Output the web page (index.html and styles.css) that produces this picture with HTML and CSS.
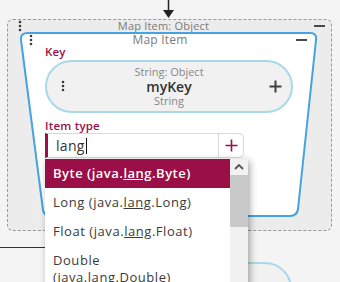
FILE: index.html
```html
<!DOCTYPE html>
<html lang="en">
  <head>
    <meta charset="UTF-8" />
    <meta name="viewport" content="width=device-width, initial-scale=1.0" />
    <title>Map Item</title>
    <link rel="stylesheet" href="styles.css">
  </head>
  <body>
    <div class="canvas">
      <!-- incoming edge -->
      <svg class="edge-in" width="14" height="19" viewBox="0 0 14 19">
        <line x1="7.5" y1="0" x2="7.5" y2="12" stroke="#222" stroke-width="1.5" />
        <polygon points="2,10 13,10 7.5,18" fill="#222" />
      </svg>
      <div class="edge-left"></div>

      <!-- node below, partly hidden -->
      <div class="pill pill-below"></div>

      <div class="node-outer">
        <div class="node-head">
          <span class="dots">
            <svg width="4" height="13" viewBox="0 0 4 13"><circle cx="2" cy="2" r="1.3" /><circle cx="2" cy="6" r="1.3" /><circle cx="2" cy="10" r="1.3" /></svg>
          </span>
          <span class="node-title">Map Item: Object</span>
          <span class="minus"></span>
        </div>

        <div class="node-inner">
          <svg class="inner-shape" width="299" height="186" viewBox="0 0 299 186">
            <path d="M8 1 L290 1 Q297 1 296 8 L278 177 Q277 184 270 184 L30 184 Q24 184 23 178 L1 8 Q0 1 8 1 Z" fill="#fff" stroke="#44a3e0" stroke-width="2" />
          </svg>
          <div class="inner-head">
            <span class="dots">
              <svg width="4" height="13" viewBox="0 0 4 13"><circle cx="2" cy="2" r="1.3" /><circle cx="2" cy="6" r="1.3" /><circle cx="2" cy="10" r="1.3" /></svg>
            </span>
            <span class="inner-title">Map Item</span>
            <span class="minus"></span>
          </div>
          <div class="inner-body">
            <div class="label">Key</div>
            <div class="pill key-pill">
              <span class="pill-side">
                <svg width="4" height="13" viewBox="0 0 4 13"><circle cx="2" cy="2" r="1.3" /><circle cx="2" cy="6" r="1.3" /><circle cx="2" cy="10" r="1.3" /></svg>
              </span>
              <div class="pill-text">
                <div class="pill-type">String: Object</div>
                <div class="pill-name">myKey</div>
                <div class="pill-type">String</div>
              </div>
              <span class="pill-side pill-side-right">
                <svg width="13" height="13" viewBox="0 0 13 13"><path d="M6.5 0.5 V12.5 M0.5 6.5 H12.5" stroke="#3d4248" stroke-width="2" /></svg>
              </span>
            </div>
            <div class="label label-type">Item type</div>
            <div class="type-input">
              <div class="type-value">lang<span class="caret"></span></div>
              <div class="type-add">
                <svg width="13" height="13" viewBox="0 0 13 13"><path d="M6.5 0.5 V12.5 M0.5 6.5 H12.5" stroke="#9a1048" stroke-width="1.6" /></svg>
              </div>
            </div>
          </div>
        </div>
      </div>

      <!-- autocomplete list -->
      <div class="dropdown">
        <ul class="options">
          <li class="option selected">Byte (java.<u>lang</u>.Byte)</li>
          <li class="option">Long (java.<u>lang</u>.Long)</li>
          <li class="option">Float (java.<u>lang</u>.Float)</li>
          <li class="option">Double (java.lang.Double)</li>
        </ul>
        <div class="scrollbar">
          <div class="scroll-up">
            <svg width="10" height="6" viewBox="0 0 10 6"><path d="M1 5 L5 1 L9 5" fill="none" stroke="#555" stroke-width="1.8" /></svg>
          </div>
          <div class="scroll-thumb"></div>
        </div>
      </div>
    </div>
  </body>
</html>
```

FILE: styles.css
```css
* {
  box-sizing: border-box;
}
html,
body {
  margin: 0;
  padding: 0;
  background-color: #f4f4f4;
  font-family: "Open Sans", "DejaVu Sans", sans-serif;
}
.canvas {
  position: relative;
  width: 340px;
  height: 282px;
  overflow: hidden;
}
.edge-in {
  position: absolute;
  left: 161px;
  top: 0;
}
.edge-left {
  position: absolute;
  left: 0;
  top: 247px;
  width: 45px;
  height: 1px;
  background: #333;
}
.pill {
  border: 2px solid #a9d8ea;
  background: #f1f1f1;
  border-radius: 27px;
}
.pill-below {
  position: absolute;
  left: 45px;
  top: 262px;
  width: 247px;
  height: 60px;
}
.node-outer {
  position: absolute;
  left: 7px;
  top: 19px;
  width: 325px;
  height: 212px;
  border: 1px dashed #9a9a9a;
  border-radius: 6px;
  background: #ececec;
}
.node-head {
  display: flex;
  align-items: center;
  height: 12px;
  padding: 0 6px 0 10px;
}
.dots svg {
  display: block;
  fill: #3a3a3a;
}
.node-title,
.inner-title {
  flex: 1;
  text-align: center;
  color: #7b7b7b;
  font-size: 11px;
  line-height: 12px;
  letter-spacing: 0.2px;
}
.minus {
  display: block;
  width: 11px;
  height: 2px;
  margin-left: 9px;
  background: #4a4a4a;
}
.node-inner {
  position: relative;
  margin: 0 0 0 12px;
  width: 299px;
  height: 186px;
}
.inner-shape {
  position: absolute;
  left: 0;
  top: 0;
}
.inner-head {
  position: relative;
  display: flex;
  align-items: center;
  height: 14px;
  padding: 2px 12px 0 9px;
}
.inner-head .inner-title {
  font-size: 12px;
}
.inner-head .dots {
  margin-top: 1px;
}
.inner-body {
  position: relative;
  padding: 0 26px 0 25px;
}
.label {
  color: #9a1048;
  font-size: 11.5px;
  font-weight: 600;
  line-height: 12px;
  letter-spacing: 0.2px;
}
.key-pill {
  display: flex;
  align-items: center;
  margin-top: 2px;
  height: 53px;
}
.pill-side {
  width: 28px;
  padding-left: 14px;
}
.pill-side svg {
  display: block;
  fill: #3a3a3a;
}
.pill-side-right {
  padding-left: 0;
  display: flex;
  justify-content: flex-end;
  padding-right: 9px;
}
.pill-text {
  flex: 1;
  text-align: center;
}
.pill-type {
  color: #888;
  font-size: 11px;
  line-height: 14px;
}
.pill-name {
  color: #333;
  font-size: 14px;
  font-weight: 600;
  line-height: 15px;
}
.label-type {
  margin-top: 7px;
}
.type-input {
  display: flex;
  margin-top: 1px;
  width: 199px;
  height: 25px;
  background: #fff;
  border: 1px solid #d9d9d9;
  border-left: 3px solid #9a1048;
  border-radius: 0 5px 5px 0;
}
.type-value {
  flex: 1;
  display: flex;
  align-items: center;
  padding-left: 8px;
  font-size: 14px;
  color: #333;
  letter-spacing: 0.3px;
}
.caret {
  display: inline-block;
  width: 1px;
  height: 16px;
  margin-left: 1px;
  background: #111;
}
.type-add {
  width: 25px;
  display: flex;
  align-items: center;
  justify-content: center;
  border-left: 1px solid #d9d9d9;
}
.dropdown {
  position: absolute;
  left: 45px;
  top: 159px;
  width: 203px;
  height: 140px;
  display: flex;
  background: #fff;
  box-shadow: 2px 2px 7px rgba(0, 0, 0, 0.35);
}
.options {
  flex: 1;
  margin: 0;
  padding: 0;
  list-style: none;
}
.option {
  padding: 6px 14px 6px 8px;
  font-size: 13px;
  font-weight: 500;
  line-height: 17px;
  letter-spacing: 0.55px;
  color: #3b3b3b;
}
.option.selected {
  background: #990f46;
  color: #fff;
  font-weight: 600;
  letter-spacing: 0.5px;
}
.scrollbar {
  width: 18px;
  background: #f1f1f1;
}
.scroll-up {
  display: flex;
  align-items: center;
  justify-content: center;
  height: 16px;
}
.scroll-thumb {
  height: 52px;
  background: #c9c9c9;
}
```
